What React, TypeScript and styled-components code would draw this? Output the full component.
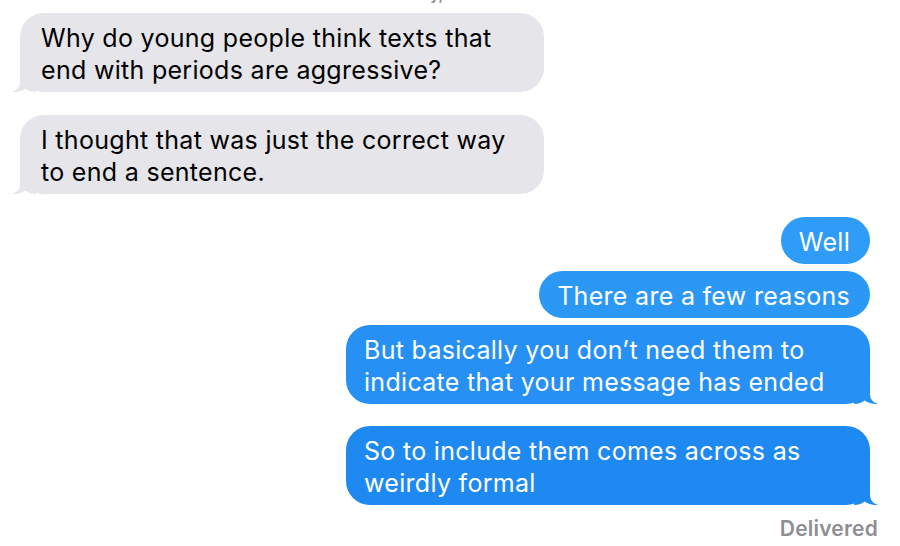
import styled, { createGlobalStyle } from "styled-components";

const GlobalStyle = createGlobalStyle`
  html, body {
    margin: 0;
    padding: 0;
    background: #ffffff;
    overflow: hidden;
  }
  body {
    font-family: Inter, "Noto Sans", "Liberation Sans", sans-serif;
    -webkit-font-smoothing: antialiased;
  }
`

const Thread = styled.div`
  width: 900px;
  height: 546px;
  display: flex;
  flex-direction: column;
  box-sizing: border-box;
  overflow: hidden;
`

const Timestamp = styled.div`
  margin-top: -14px;
  height: 18px;
  line-height: 18px;
  font-size: 15px;
  font-weight: 600;
  color: #8e8e93;
  text-align: center;
  margin-bottom: 9px;
`

const Row = styled.div<{ $mine?: boolean; $gap: number }>`
  display: flex;
  justify-content: ${p => (p.$mine ? "flex-end" : "flex-start")};
  padding: 0 30px 0 20px;
  margin-top: ${p => p.$gap}px;
`

const Bubble = styled.div<{ $mine?: boolean; $bg: string; $wide?: boolean }>`
  position: relative;
  box-sizing: border-box;
  width: ${p => (p.$wide ? "524px" : "auto")};
  padding: 9px ${p => (p.$mine ? "20px" : "21px")} 6px ${p => (p.$mine ? "18px" : "21px")};
  border-radius: 24px;
  background: ${p => p.$bg};
  color: ${p => (p.$mine ? "#ffffff" : "#000000")};
  font-size: 25px;
  line-height: 32px;
  letter-spacing: 0.3px;
  white-space: nowrap;
`

const Tail = styled.svg<{ $mine?: boolean }>`
  position: absolute;
  bottom: 0;
  width: 24px;
  height: 22px;
  ${p => (p.$mine ? "right: -8px; transform: scaleX(-1);" : "left: -8px;")}
`

const Footer = styled.div`
  margin-top: 12px;
  padding-right: 22px;
  text-align: right;
  font-size: 21px;
  line-height: 24px;
  font-weight: 600;
  letter-spacing: 0.2px;
  color: #8e8e93;
`

type Msg = {
  lines: string[];
  mine?: boolean;
  tail?: boolean;
  gap: number;
  bg: string;
}

const messages: Msg[] = [
  { lines: ["Why do young people think texts that", "end with periods are aggressive?"], tail: true, gap: 0, bg: "#e5e5ea" },
  { lines: ["I thought that was just the correct way", "to end a sentence."], tail: true, gap: 23, bg: "#e5e5ea" },
  { lines: ["Well"], mine: true, gap: 23, bg: "#2f9cf7" },
  { lines: ["There are a few reasons"], mine: true, gap: 7, bg: "#2c98f6" },
  { lines: ["But basically you don’t need them to", "indicate that your message has ended"], mine: true, tail: true, gap: 7, bg: "#2690f4" },
  { lines: ["So to include them comes across as", "weirdly formal"], mine: true, tail: true, gap: 22, bg: "#1f89f2" },
]

const TailShape = ({ mine, color }: { mine?: boolean; color: string }) => (
  <Tail $mine={mine} viewBox="0 0 24 22">
    <path
      d="M8 0 L8 12 C8 17 5 20.5 0 22 C5 22.4 10 21 13.5 18.6 C16 20.8 19 22 24 22 L24 0 Z"
      fill={color}
    />
  </Tail>
)

export default function App() {
  return (
    <Thread>
      <GlobalStyle />
      <Timestamp>Today, 9:41 AM</Timestamp>
      {messages.map((m, i) => (
        <Row key={i} $mine={m.mine} $gap={m.gap}>
          <Bubble $mine={m.mine} $bg={m.bg} $wide={m.lines.length > 1}>
            {m.lines.map((l, j) => (
              <div key={j}>{l}</div>
            ))}
            {m.tail && <TailShape mine={m.mine} color={m.bg} />}
          </Bubble>
        </Row>
      ))}
      <Footer>Delivered</Footer>
    </Thread>
  )
}
